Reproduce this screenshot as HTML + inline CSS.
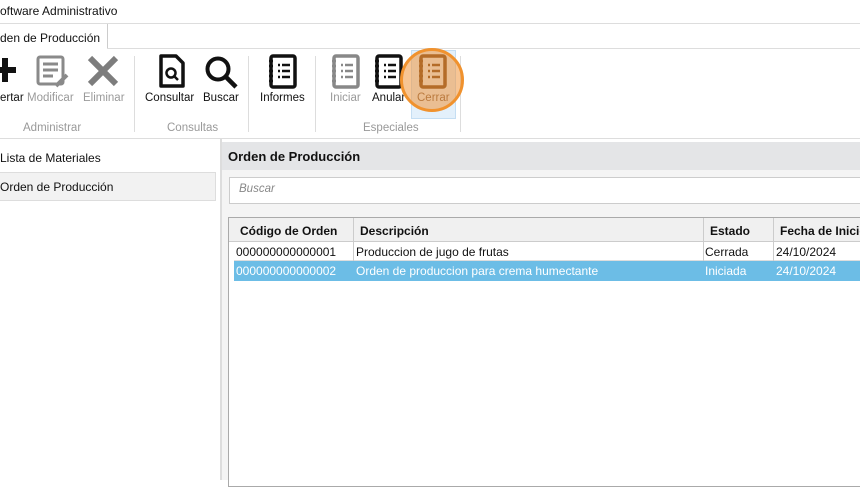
<!DOCTYPE html>
<html><head><meta charset="utf-8"><style>
*{margin:0;padding:0;box-sizing:border-box}
body{width:860px;height:480px;overflow:hidden;background:#fff;font-family:"Segoe UI","Liberation Sans",sans-serif;font-size:12px;color:#111;position:relative}
.a{position:absolute}
.lbl{position:absolute;top:92px;font-size:11.5px;white-space:nowrap}
.g{color:#9a9a9a}
.grp{position:absolute;top:122px;font-size:11.5px;color:#999}
.sep{position:absolute;top:56px;width:1px;height:76px;background:#ddd}
.cell{position:absolute;white-space:nowrap}
</style></head><body>
<div class="a" style="left:0;top:4px;font-size:12px">oftware Administrativo</div>
<div class="a" style="left:0;top:23px;width:860px;height:1px;background:#ddd"></div>
<div class="a" style="left:0;top:24px;width:108px;height:25px;background:#fff;border-right:1px solid #ccc"></div>
<div class="a" style="left:0;top:31px">den de Producción</div>
<div class="a" style="left:107px;top:48px;width:753px;height:1px;background:#ddd"></div>
<div class="a" style="left:0;top:138px;width:860px;height:1px;background:#ddd"></div>

<div class="a" style="left:411px;top:50px;width:45px;height:69px;background:#e3f0fb;border:1px solid #c5def3"></div>

<svg class="a" style="left:0;top:0" width="470" height="120">
<defs>
<g id="nb"><rect x="3" y="1" width="24" height="31" rx="2" fill="none" stroke="currentColor" stroke-width="3.5"/>
<g stroke="currentColor" stroke-width="2.5"><line x1="1" y1="6" x2="5" y2="6"/><line x1="1" y1="11" x2="5" y2="11"/><line x1="1" y1="16" x2="5" y2="16"/><line x1="1" y1="21" x2="5" y2="21"/><line x1="1" y1="26" x2="5" y2="26"/>
<line x1="10" y1="10" x2="12" y2="10"/><line x1="14" y1="10" x2="22" y2="10"/><line x1="10" y1="16" x2="12" y2="16"/><line x1="14" y1="16" x2="22" y2="16"/><line x1="10" y1="22" x2="12" y2="22"/><line x1="14" y1="22" x2="22" y2="22"/></g></g>
</defs>
<path d="M-4 70H16M5 58V82" stroke="#111" stroke-width="6"/>
<g stroke="#8a8a8a" fill="none" stroke-width="3"><rect x="38" y="57" width="25" height="27" rx="2"/><path d="M43 64H58M43 70H58M43 76H53"/><path d="M56 86L67 75" stroke-width="4"/></g>
<path d="M90 58L116 84M116 58L90 84" stroke="#7d7d7d" stroke-width="6"/>
<path d="M161 56H176L183 63V86H161Z" fill="none" stroke="#111" stroke-width="3.5" stroke-linejoin="round"/>
<circle cx="171" cy="73" r="4.5" fill="none" stroke="#111" stroke-width="2.5"/><path d="M174 76L178 80" stroke="#111" stroke-width="2.5"/>
<circle cx="218" cy="69" r="10.5" fill="none" stroke="#111" stroke-width="4"/><path d="M226 77L236 87" stroke="#111" stroke-width="4.5"/>
<use href="#nb" x="268" y="55" style="color:#111"/>
<use href="#nb" x="331" y="55" style="color:#888"/>
<use href="#nb" x="374" y="55" style="color:#111"/>
<use href="#nb" x="418" y="55" style="color:#6b3a10"/>
</svg>

<div class="lbl" style="left:0">ertar</div>
<div class="lbl g" style="left:27px">Modificar</div>
<div class="lbl g" style="left:83px">Eliminar</div>
<div class="lbl" style="left:145px">Consultar</div>
<div class="lbl" style="left:203px">Buscar</div>
<div class="lbl" style="left:260px">Informes</div>
<div class="lbl g" style="left:330px">Iniciar</div>
<div class="lbl" style="left:372px">Anular</div>
<div class="lbl" style="left:417px;color:#7a5a40">Cerrar</div>
<div class="grp" style="left:23px">Administrar</div>
<div class="grp" style="left:167px">Consultas</div>
<div class="grp" style="left:363px">Especiales</div>
<div class="sep" style="left:134px"></div>
<div class="sep" style="left:248px"></div>
<div class="sep" style="left:315px"></div>
<div class="sep" style="left:460px"></div>
<div class="a" style="left:400px;top:48px;width:64px;height:64px;border-radius:50%;background:rgba(240,150,60,.55);border:3px solid #f0922e"></div>

<div class="a" style="left:0;top:151px">Lista de Materiales</div>
<div class="a" style="left:0;top:172px;width:216px;height:29px;background:#f2f2f2;border:1px solid #ddd;border-left:none"></div>
<div class="a" style="left:0;top:180px">Orden de Producción</div>
<div class="a" style="left:220px;top:139px;width:2px;height:341px;background:#ddd"></div>

<div class="a" style="left:222px;top:142px;width:638px;height:28px;background:#e4e5e7"></div>
<div class="a" style="left:228px;top:149px;font-weight:bold;font-size:13px">Orden de Producción</div>
<div class="a" style="left:222px;top:170px;width:638px;height:310px;background:#f4f4f4"></div>
<div class="a" style="left:229px;top:177px;width:640px;height:27px;background:#fff;border:1px solid #ccc"></div>
<div class="a" style="left:239px;top:183px;font-style:italic;color:#888;font-size:11.5px">Buscar</div>
<div class="a" style="left:228px;top:217px;width:640px;height:270px;background:#fff;border:1px solid #aaa"></div>
<div class="a" style="left:229px;top:218px;width:640px;height:24px;background:#f0f0f0;border-bottom:1px solid #ccc"></div>
<div class="a" style="left:234px;top:242px;width:630px;height:19px;border-bottom:1px solid #ddd"></div>
<div class="a" style="left:234px;top:261px;width:630px;height:20px;background:#6cbde6"></div>
<div class="a" style="left:353px;top:218px;width:1px;height:43px;background:#ccc"></div>
<div class="a" style="left:703px;top:218px;width:1px;height:43px;background:#ccc"></div>
<div class="a" style="left:773px;top:218px;width:1px;height:43px;background:#ccc"></div>
<div class="cell" style="left:240px;top:224px;font-weight:bold">Código de Orden</div>
<div class="cell" style="left:360px;top:224px;font-weight:bold">Descripción</div>
<div class="cell" style="left:710px;top:224px;font-weight:bold">Estado</div>
<div class="cell" style="left:780px;top:224px;font-weight:bold">Fecha de Inicio</div>
<div class="cell" style="left:236px;top:245px">000000000000001</div>
<div class="cell" style="left:356px;top:245px">Produccion de jugo de frutas</div>
<div class="cell" style="left:705px;top:245px">Cerrada</div>
<div class="cell" style="left:776px;top:245px">24/10/2024</div>
<div class="cell" style="left:236px;top:264px;color:#fff">000000000000002</div>
<div class="cell" style="left:356px;top:264px;color:#fff">Orden de produccion para crema humectante</div>
<div class="cell" style="left:705px;top:264px;color:#fff">Iniciada</div>
<div class="cell" style="left:776px;top:264px;color:#fff">24/10/2024</div>
</body></html>
